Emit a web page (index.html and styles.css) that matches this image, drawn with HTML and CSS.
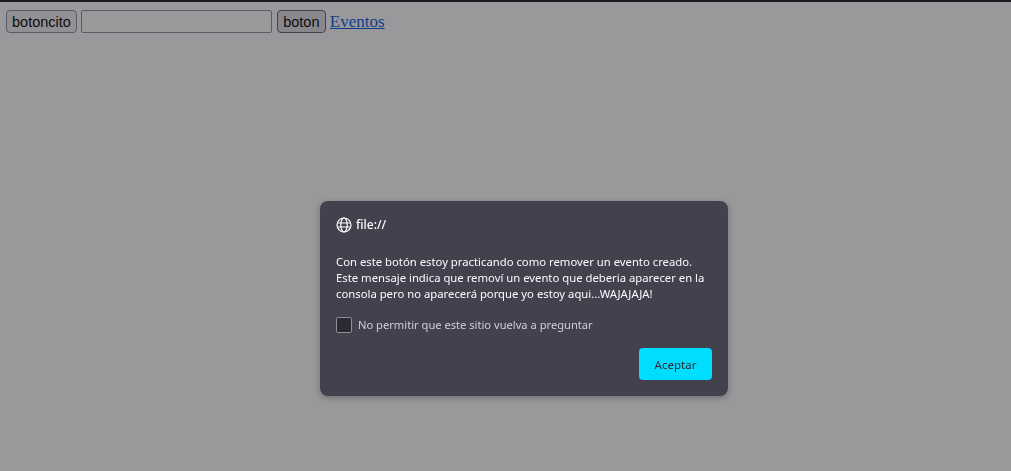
FILE: index.html
```html
<!DOCTYPE html>
<html>
<head>
  <meta charset="utf-8">
  <title>Eventos</title>
  <link rel="stylesheet" href="styles.css">
</head>
<body>
  <div class="toolbar">
    <button class="btn">botoncito</button>
    <input type="text" class="field">
    <button class="btn btn-hover">boton</button>
    <a href="#" class="link">Eventos</a>
  </div>

  <div class="overlay">
    <div class="dialog">
      <div class="dialog-origin">
        <svg class="globe" width="16" height="16" viewBox="0 0 16 16" fill="none" stroke="#fbfbfe" stroke-width="1.2">
          <circle cx="8" cy="8" r="7"/>
          <ellipse cx="8" cy="8" rx="3.2" ry="7"/>
          <path d="M1.2 6h13.6M1.2 10h13.6"/>
        </svg>
        <span>file://</span>
      </div>
      <p class="dialog-text">Con este botón estoy practicando como remover un evento creado. Este mensaje indica que removí un evento que deberia aparecer en la consola pero no aparecerá porque yo estoy aqui...WAJAJAJA!</p>
      <label class="dialog-check">
        <span class="checkbox"></span>
        <span>No permitir que este sitio vuelva a preguntar</span>
      </label>
      <div class="dialog-actions">
        <button class="btn-accept">Aceptar</button>
      </div>
    </div>
  </div>
</body>
</html>
```

FILE: styles.css
```css
html, body {
  height: 100%;
}
body {
  margin: 0;
  background-color: white;
  font-family: "Liberation Serif", serif;
  overflow: hidden;
}
.toolbar {
  display: flex;
  align-items: center;
  gap: 4px;
  padding: 10px 6px 0;
}
.btn {
  height: 23px;
  padding: 0 5px;
  font-family: "Liberation Sans", Arial, sans-serif;
  font-size: 14.5px;
  color: black;
  background-color: #f0f0f4;
  border: 1px solid #8f8f9d;
  border-radius: 4px;
}
.btn-hover {
  width: 49px;
  margin-left: 1px;
  background-color: #e0e0e6;
  border-color: #676774;
}
.field {
  width: 191px;
  height: 23px;
  box-sizing: border-box;
  background-color: white;
  border: 1px solid #8f8f9d;
  border-radius: 2px;
}
.link {
  font-size: 17px;
  color: #0060df;
}
.overlay {
  position: fixed;
  inset: 0;
  background-color: rgba(28,27,34,0.45);
  border-top: 2px solid #1c1b22;
  box-sizing: border-box;
}
.dialog {
  position: absolute;
  left: 320px;
  top: 199px;
  width: 408px;
  height: 195px;
  box-sizing: border-box;
  padding: 16px;
  background-color: #42414d;
  border-radius: 8px;
  box-shadow: 0 2px 6px rgba(15,15,20,0.3);
  color: #fbfbfe;
  font-family: "Noto Sans", "Open Sans", sans-serif;
  font-size: 11.3px;
  line-height: 16px;
}
.dialog-origin {
  display: flex;
  align-items: center;
  gap: 4px;
  height: 16px;
  font-size: 12px;
  font-weight: 500;
}
.dialog-text {
  margin: 21px 0 0;
  width: 372px;
}
.dialog-check {
  display: flex;
  align-items: center;
  gap: 6px;
  margin-top: 15px;
  font-size: 11.15px;
  color: #cfcfd8;
}
.checkbox {
  width: 14px;
  height: 14px;
  background-color: #2b2a33;
  border: 1px solid #8f8f9d;
  border-radius: 2px;
}
.dialog-actions {
  display: flex;
  justify-content: flex-end;
  margin-top: 15px;
}
.btn-accept {
  width: 73px;
  height: 32px;
  font-family: "Noto Sans", "Open Sans", sans-serif;
  font-size: 11.5px;
  color: #2b2a33;
  background-color: #00ddff;
  border: none;
  border-radius: 4px;
}
```
